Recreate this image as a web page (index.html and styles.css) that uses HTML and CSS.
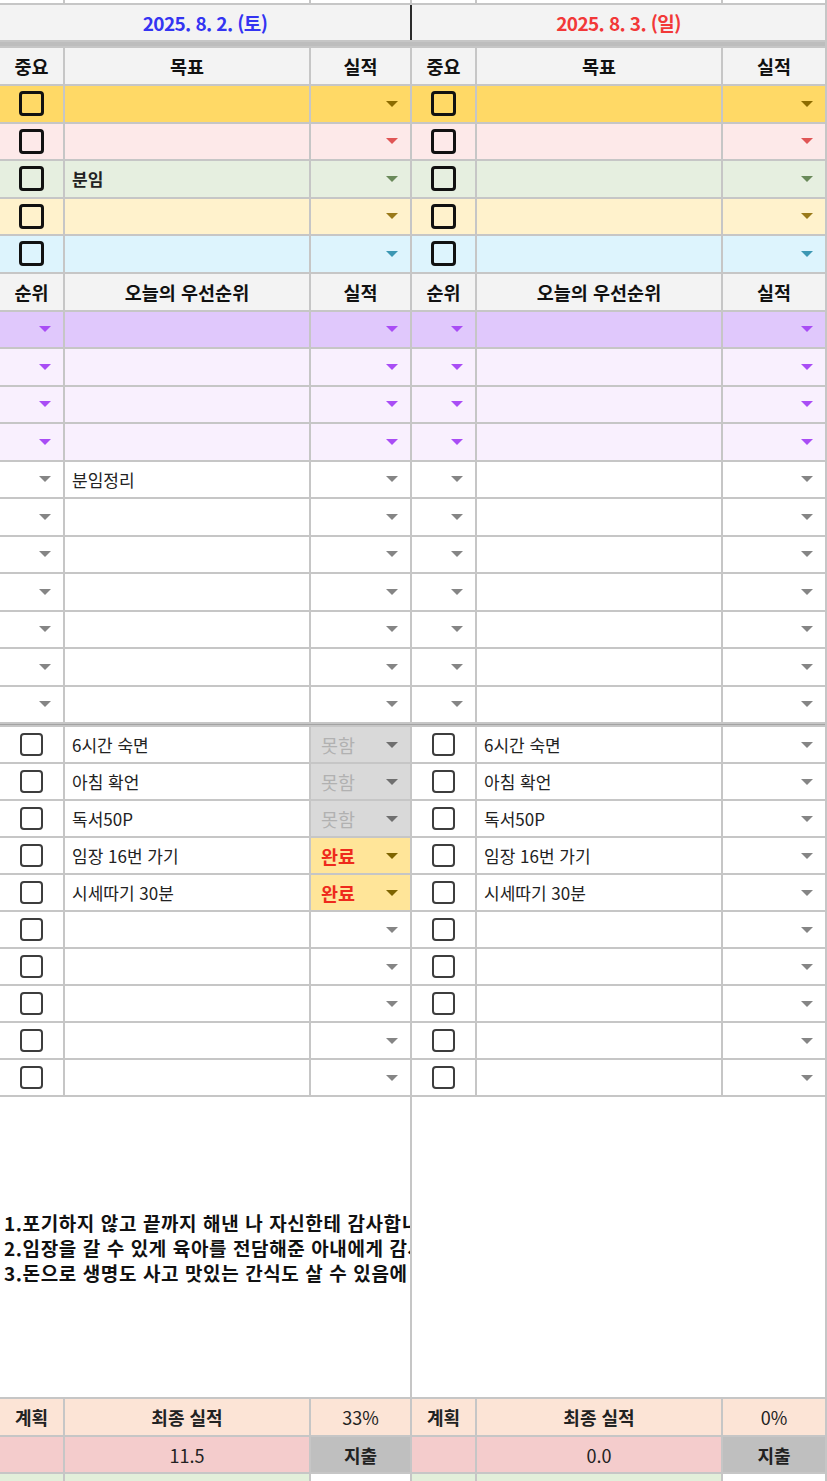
FILE: index.html
```html
<!DOCTYPE html>
<html lang="ko">
<head>
  <meta charset="UTF-8">
  <meta name="viewport" content="width=device-width, initial-scale=1.0">
  <title>주간 플래너</title>
  <link rel="stylesheet" href="styles.css">
</head>
<body>
  <div class="sheet">
    <!-- 위쪽에 잘린 행 -->
    <div class="row strip">
      <div class="c"></div><div class="c"></div><div class="c"></div>
      <div class="c"></div><div class="c"></div><div class="c"></div>
    </div>

    <!-- 날짜 -->
    <div class="row">
      <div class="c date sat">2025. 8. 2. (토)</div>
      <div class="c date sun">2025. 8. 3. (일)</div>
    </div>
    <div class="band"></div>

    <!-- 목표 -->
    <div class="row head">
      <div class="c">중요</div><div class="c">목표</div><div class="c">실적</div>
      <div class="c">중요</div><div class="c">목표</div><div class="c">실적</div>
    </div>
    <div class="row goal g1">
      <div class="c chk"><span class="box"></span></div><div class="c txt"></div><div class="c sel"><i class="dd"></i></div>
      <div class="c chk"><span class="box"></span></div><div class="c txt"></div><div class="c sel"><i class="dd"></i></div>
    </div>
    <div class="row goal g2">
      <div class="c chk"><span class="box"></span></div><div class="c txt"></div><div class="c sel"><i class="dd"></i></div>
      <div class="c chk"><span class="box"></span></div><div class="c txt"></div><div class="c sel"><i class="dd"></i></div>
    </div>
    <div class="row goal g3">
      <div class="c chk"><span class="box"></span></div><div class="c txt bold">분임</div><div class="c sel"><i class="dd"></i></div>
      <div class="c chk"><span class="box"></span></div><div class="c txt"></div><div class="c sel"><i class="dd"></i></div>
    </div>
    <div class="row goal g4">
      <div class="c chk"><span class="box"></span></div><div class="c txt"></div><div class="c sel"><i class="dd"></i></div>
      <div class="c chk"><span class="box"></span></div><div class="c txt"></div><div class="c sel"><i class="dd"></i></div>
    </div>
    <div class="row goal g5">
      <div class="c chk"><span class="box"></span></div><div class="c txt"></div><div class="c sel"><i class="dd"></i></div>
      <div class="c chk"><span class="box"></span></div><div class="c txt"></div><div class="c sel"><i class="dd"></i></div>
    </div>

    <!-- 오늘의 우선순위 -->
    <div class="row head">
      <div class="c">순위</div><div class="c">오늘의 우선순위</div><div class="c">실적</div>
      <div class="c">순위</div><div class="c">오늘의 우선순위</div><div class="c">실적</div>
    </div>
    <div class="row prio p1">
      <div class="c sel"><i class="dd"></i></div><div class="c txt"></div><div class="c sel"><i class="dd"></i></div>
      <div class="c sel"><i class="dd"></i></div><div class="c txt"></div><div class="c sel"><i class="dd"></i></div>
    </div>
    <div class="row prio p2">
      <div class="c sel"><i class="dd"></i></div><div class="c txt"></div><div class="c sel"><i class="dd"></i></div>
      <div class="c sel"><i class="dd"></i></div><div class="c txt"></div><div class="c sel"><i class="dd"></i></div>
    </div>
    <div class="row prio p2">
      <div class="c sel"><i class="dd"></i></div><div class="c txt"></div><div class="c sel"><i class="dd"></i></div>
      <div class="c sel"><i class="dd"></i></div><div class="c txt"></div><div class="c sel"><i class="dd"></i></div>
    </div>
    <div class="row prio p2">
      <div class="c sel"><i class="dd"></i></div><div class="c txt"></div><div class="c sel"><i class="dd"></i></div>
      <div class="c sel"><i class="dd"></i></div><div class="c txt"></div><div class="c sel"><i class="dd"></i></div>
    </div>
    <div class="row prio">
      <div class="c sel"><i class="dd"></i></div><div class="c txt">분임정리</div><div class="c sel"><i class="dd"></i></div>
      <div class="c sel"><i class="dd"></i></div><div class="c txt"></div><div class="c sel"><i class="dd"></i></div>
    </div>
    <div class="row prio">
      <div class="c sel"><i class="dd"></i></div><div class="c txt"></div><div class="c sel"><i class="dd"></i></div>
      <div class="c sel"><i class="dd"></i></div><div class="c txt"></div><div class="c sel"><i class="dd"></i></div>
    </div>
    <div class="row prio">
      <div class="c sel"><i class="dd"></i></div><div class="c txt"></div><div class="c sel"><i class="dd"></i></div>
      <div class="c sel"><i class="dd"></i></div><div class="c txt"></div><div class="c sel"><i class="dd"></i></div>
    </div>
    <div class="row prio">
      <div class="c sel"><i class="dd"></i></div><div class="c txt"></div><div class="c sel"><i class="dd"></i></div>
      <div class="c sel"><i class="dd"></i></div><div class="c txt"></div><div class="c sel"><i class="dd"></i></div>
    </div>
    <div class="row prio">
      <div class="c sel"><i class="dd"></i></div><div class="c txt"></div><div class="c sel"><i class="dd"></i></div>
      <div class="c sel"><i class="dd"></i></div><div class="c txt"></div><div class="c sel"><i class="dd"></i></div>
    </div>
    <div class="row prio">
      <div class="c sel"><i class="dd"></i></div><div class="c txt"></div><div class="c sel"><i class="dd"></i></div>
      <div class="c sel"><i class="dd"></i></div><div class="c txt"></div><div class="c sel"><i class="dd"></i></div>
    </div>
    <div class="row prio">
      <div class="c sel"><i class="dd"></i></div><div class="c txt"></div><div class="c sel"><i class="dd"></i></div>
      <div class="c sel"><i class="dd"></i></div><div class="c txt"></div><div class="c sel"><i class="dd"></i></div>
    </div>
    <div class="thick"></div>

    <!-- 루틴 체크 -->
    <div class="row check">
      <div class="c chk"><span class="box"></span></div><div class="c txt">6시간 숙면</div><div class="c sel miss"><span>못함</span><i class="dd"></i></div>
      <div class="c chk"><span class="box"></span></div><div class="c txt">6시간 숙면</div><div class="c sel"><i class="dd"></i></div>
    </div>
    <div class="row check">
      <div class="c chk"><span class="box"></span></div><div class="c txt">아침 확언</div><div class="c sel miss"><span>못함</span><i class="dd"></i></div>
      <div class="c chk"><span class="box"></span></div><div class="c txt">아침 확언</div><div class="c sel"><i class="dd"></i></div>
    </div>
    <div class="row check">
      <div class="c chk"><span class="box"></span></div><div class="c txt">독서50P</div><div class="c sel miss"><span>못함</span><i class="dd"></i></div>
      <div class="c chk"><span class="box"></span></div><div class="c txt">독서50P</div><div class="c sel"><i class="dd"></i></div>
    </div>
    <div class="row check">
      <div class="c chk"><span class="box"></span></div><div class="c txt">임장 16번 가기</div><div class="c sel done"><span>완료</span><i class="dd"></i></div>
      <div class="c chk"><span class="box"></span></div><div class="c txt">임장 16번 가기</div><div class="c sel"><i class="dd"></i></div>
    </div>
    <div class="row check">
      <div class="c chk"><span class="box"></span></div><div class="c txt">시세따기 30분</div><div class="c sel done"><span>완료</span><i class="dd"></i></div>
      <div class="c chk"><span class="box"></span></div><div class="c txt">시세따기 30분</div><div class="c sel"><i class="dd"></i></div>
    </div>
    <div class="row check">
      <div class="c chk"><span class="box"></span></div><div class="c txt"></div><div class="c sel"><i class="dd"></i></div>
      <div class="c chk"><span class="box"></span></div><div class="c txt"></div><div class="c sel"><i class="dd"></i></div>
    </div>
    <div class="row check">
      <div class="c chk"><span class="box"></span></div><div class="c txt"></div><div class="c sel"><i class="dd"></i></div>
      <div class="c chk"><span class="box"></span></div><div class="c txt"></div><div class="c sel"><i class="dd"></i></div>
    </div>
    <div class="row check">
      <div class="c chk"><span class="box"></span></div><div class="c txt"></div><div class="c sel"><i class="dd"></i></div>
      <div class="c chk"><span class="box"></span></div><div class="c txt"></div><div class="c sel"><i class="dd"></i></div>
    </div>
    <div class="row check">
      <div class="c chk"><span class="box"></span></div><div class="c txt"></div><div class="c sel"><i class="dd"></i></div>
      <div class="c chk"><span class="box"></span></div><div class="c txt"></div><div class="c sel"><i class="dd"></i></div>
    </div>
    <div class="row check">
      <div class="c chk"><span class="box"></span></div><div class="c txt"></div><div class="c sel"><i class="dd"></i></div>
      <div class="c chk"><span class="box"></span></div><div class="c txt"></div><div class="c sel"><i class="dd"></i></div>
    </div>

    <!-- 감사일기 -->
    <div class="row">
      <div class="c memo">
        <p>1.포기하지 않고 끝까지 해낸 나 자신한테 감사합니다</p>
        <p>2.임장을 갈 수 있게 육아를 전담해준 아내에게 감사합니다</p>
        <p>3.돈으로 생명도 사고 맛있는 간식도 살 수 있음에 감사합니다</p>
      </div>
      <div class="c memo"></div>
    </div>

    <!-- 결과 -->
    <div class="row foot1">
      <div class="c bold">계획</div><div class="c bold">최종 실적</div><div class="c">33%</div>
      <div class="c bold">계획</div><div class="c bold">최종 실적</div><div class="c">0%</div>
    </div>
    <div class="row foot2">
      <div class="c"></div><div class="c">11.5</div><div class="c bold spend">지출</div>
      <div class="c"></div><div class="c">0.0</div><div class="c bold spend">지출</div>
    </div>
    <div class="row foot3">
      <div class="c"></div><div class="c"></div><div class="c"></div>
      <div class="c"></div><div class="c"></div><div class="c"></div>
    </div>
  </div>
</body>
</html>
```

FILE: styles.css
```css
body {
  margin: 0;
  font-family: "Noto Sans CJK KR", "Noto Sans", sans-serif;
  background: #fff;
}
.sheet {
  display: grid;
  grid-template-columns: 63px 244px 99px 63px 244px 102px;
  gap: 2px;
  width: 825px;
  padding-right: 2px;
  background: #c6c6c6;
}
.row {
  display: contents;
}
.c {
  display: flex;
  align-items: center;
  justify-content: center;
  background: #fff;
  color: #222;
  font-size: 17px;
  white-space: nowrap;
  overflow: hidden;
}
.bold {
  font-weight: 700;
}

/* 맨 위 잘린 행 */
.strip .c {
  height: 3px;
}

/* 날짜 */
.date {
  grid-column: span 3;
  height: 35px;
  background: #f3f3f3;
  font-size: 19px;
  font-weight: 700;
  letter-spacing: -0.6px;
}
.sat {
  color: #3434f2;
  box-shadow: 2px 0 0 #2b2b2b;
}
.sun {
  color: #f23838;
}
.band {
  grid-column: 1 / -1;
  height: 4px;
  background: #bdbdbd;
}
.thick {
  grid-column: 1 / -1;
  height: 1px;
  background: #a3a3a3;
}

/* 머리행 */
.head .c {
  height: 36px;
  background: #f3f3f3;
  font-size: 18.5px;
  font-weight: 700;
  color: #111;
}

/* 셀 종류 */
.txt {
  justify-content: flex-start;
  padding-left: 7px;
}
.sel {
  justify-content: flex-end;
  padding-right: 12px;
}
.sel span {
  margin-right: auto;
  padding-left: 10px;
  font-size: 18.5px;
}
.chk .box {
  width: 19px;
  height: 19px;
  border: 3px solid #111;
  border-radius: 4px;
}
.check .chk .box {
  border-width: 2.5px;
  border-color: #3d3d3d;
}
.dd {
  width: 0;
  height: 0;
  border-left: 6px solid transparent;
  border-right: 6px solid transparent;
  border-top: 6px solid #858585;
}

/* 목표 */
.goal .c {
  height: 35.5px;
}
.g1 .c { background: #ffd966; }
.g1 .dd { border-top-color: #8c6b00; }
.g2 .c { background: #fde9e9; }
.g2 .dd { border-top-color: #e05555; }
.g3 .c { background: #e6efe0; }
.g3 .dd { border-top-color: #6a8a5a; }
.g4 .c { background: #fff2cc; }
.g4 .dd { border-top-color: #9a7a1a; }
.g5 .c { background: #ddf4fd; }
.g5 .dd { border-top-color: #3c97b3; }

/* 우선순위 */
.prio .c {
  height: 35.5px;
}
.p1 .c { background: #e0c8fc; }
.p2 .c { background: #f9f0fe; }
.p1 .dd,
.p2 .dd { border-top-color: #a94df5; }

/* 체크리스트 */
.check .c {
  height: 35px;
}
.miss {
  background: #d9d9d9 !important;
  color: #b1b1b1;
}
.miss .dd { border-top-color: #6f6f6f; }
.done {
  background: #ffe599 !important;
  color: #ee2a1c;
  font-weight: 700;
}
.done .dd { border-top-color: #7e6400; }

/* 메모 */
.memo {
  grid-column: span 3;
  height: 300px;
  flex-direction: column;
  align-items: flex-start;
  padding-left: 4px;
}
.memo p {
  margin: 0;
  line-height: 25px;
  font-size: 19px;
  font-weight: 700;
  letter-spacing: 0.6px;
  color: #111;
}

/* 결과 */
.foot1 .c,
.foot2 .c {
  font-size: 18px;
}
.foot1 .c {
  height: 36px;
  background: #fce4d6;
}
.foot2 .c {
  height: 35px;
  background: #f4cccc;
}
.foot2 .spend {
  background: #bfbfbf;
}
.foot3 .c {
  height: 8px;
  background: #e2efda;
}
.foot3 .c:nth-child(3),
.foot3 .c:nth-child(6) {
  background: #fff;
}
```
